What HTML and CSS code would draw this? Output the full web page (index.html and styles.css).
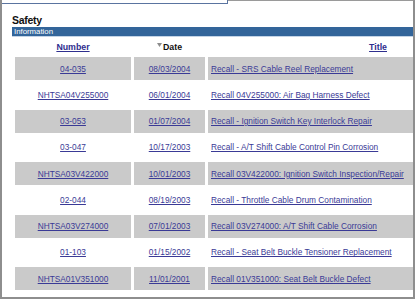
FILE: index.html
```html
<!DOCTYPE html>
<html>
<head>
<meta charset="utf-8">
<link rel="stylesheet" href="styles.css">
</head>
<body>
<div class="frame">
  <div class="topbar"><div class="tab"></div><div class="rest"></div></div>
  <div class="content">
    <h1 class="title">Safety</h1>
    <div class="infobar">Information</div>
    <div class="tablewrap">
      <table class="grid">
        <colgroup><col class="c1"><col class="c2"><col class="c3"></colgroup>
        <tr class="head">
          <th class="hnum"><a href="#">Number</a></th>
          <th class="hdate"><svg class="tri" width="5" height="4" viewBox="0 0 5 4"><path d="M0 0H5L2.5 4Z" fill="#8c8c8c"/></svg>Date</th>
          <th class="htitle"><a href="#">Title</a></th>
        </tr>
        <tr class="odd"><td><a href="#">04-035</a></td><td><a href="#">08/03/2004</a></td><td class="t"><a href="#">Recall - SRS Cable Reel Replacement</a></td></tr>
        <tr><td><a href="#">NHTSA04V255000</a></td><td><a href="#">06/01/2004</a></td><td class="t"><a href="#">Recall 04V255000: Air Bag Harness Defect</a></td></tr>
        <tr class="odd"><td><a href="#">03-053</a></td><td><a href="#">01/07/2004</a></td><td class="t"><a href="#">Recall - Ignition Switch Key Interlock Repair</a></td></tr>
        <tr><td><a href="#">03-047</a></td><td><a href="#">10/17/2003</a></td><td class="t"><a href="#">Recall - A/T Shift Cable Control Pin Corrosion</a></td></tr>
        <tr class="odd"><td><a href="#">NHTSA03V422000</a></td><td><a href="#">10/01/2003</a></td><td class="t"><a href="#">Recall 03V422000: Ignition Switch Inspection/Repair</a></td></tr>
        <tr><td><a href="#">02-044</a></td><td><a href="#">08/19/2003</a></td><td class="t"><a href="#">Recall - Throttle Cable Drum Contamination</a></td></tr>
        <tr class="odd"><td><a href="#">NHTSA03V274000</a></td><td><a href="#">07/01/2003</a></td><td class="t"><a href="#">Recall 03V274000: A/T Shift Cable Corrosion</a></td></tr>
        <tr><td><a href="#">01-103</a></td><td><a href="#">01/15/2002</a></td><td class="t"><a href="#">Recall - Seat Belt Buckle Tensioner Replacement</a></td></tr>
        <tr class="odd"><td><a href="#">NHTSA01V351000</a></td><td><a href="#">11/01/2001</a></td><td class="t"><a href="#">Recall 01V351000: Seat Belt Buckle Defect</a></td></tr>
      </table>
    </div>
  </div>
</div>
</body>
</html>
```
FILE: styles.css
```css
html, body {
  margin: 0;
  padding: 0;
  background: #ffffff;
}
body {
  width: 415px;
  height: 300px;
  overflow: hidden;
  font-family: "Liberation Sans", Arial, sans-serif;
}
.frame {
  box-sizing: border-box;
  width: 415px;
  height: 299px;
  border-left: 2px solid #8e8e8e;
  border-right: 2px solid #8e8e8e;
  border-bottom: 2px solid #8e8e8e;
  overflow: hidden;
}
.topbar {
  display: flex;
  height: 4px;
}
.tab {
  box-sizing: border-box;
  width: 226px;
  height: 4px;
  border-bottom: 1px solid #5a74a0;
  border-right: 1px solid #5a74a0;
}
.rest {
  flex: 1;
  border-top: 1px solid #9a9a9a;
}
.content {
  padding-left: 10px;
}
.title {
  margin: 0;
  padding-top: 9px;
  font-size: 10.5px;
  line-height: 14px;
  font-weight: bold;
  letter-spacing: -0.3px;
  color: #111;
}
.infobar {
  margin-top: 0;
  height: 9px;
  background: #33659a;
  border-bottom: 1px solid #c4d4e6;
  color: #ffffff;
  font-size: 7.8px;
  line-height: 10px;
  padding-left: 2px;
}
.tablewrap {
  overflow: hidden;
}
.grid {
  border-collapse: separate;
  border-spacing: 3px;
  width: 412px;
  table-layout: fixed;
  font-size: 8.3px;
}
.c1 { width: 116px; }
.c2 { width: 71px; }
.grid a {
  color: #3a3a96;
  text-decoration: underline;
}
.grid tr {
  height: 23.25px;
}
.grid tr.head {
  height: 14px;
}
.grid th {
  padding: 0;
  font-size: 8.8px;
  font-weight: bold;
  color: #111;
  vertical-align: middle;
}
.grid th a {
  color: #2e2e8e;
}
.hnum { text-align: center; }
.hdate { text-align: center; padding-left: 2px; }
.htitle { text-align: right; padding-right: 34px !important; }
.tri {
  vertical-align: 3px;
  margin-right: 1px;
}
.grid td {
  padding: 0;
  text-align: center;
  vertical-align: middle;
  white-space: nowrap;
  overflow: hidden;
}
.grid td.t {
  text-align: left;
  padding-left: 3px;
}
.grid tr.odd td {
  background: #cacaca;
}
```
